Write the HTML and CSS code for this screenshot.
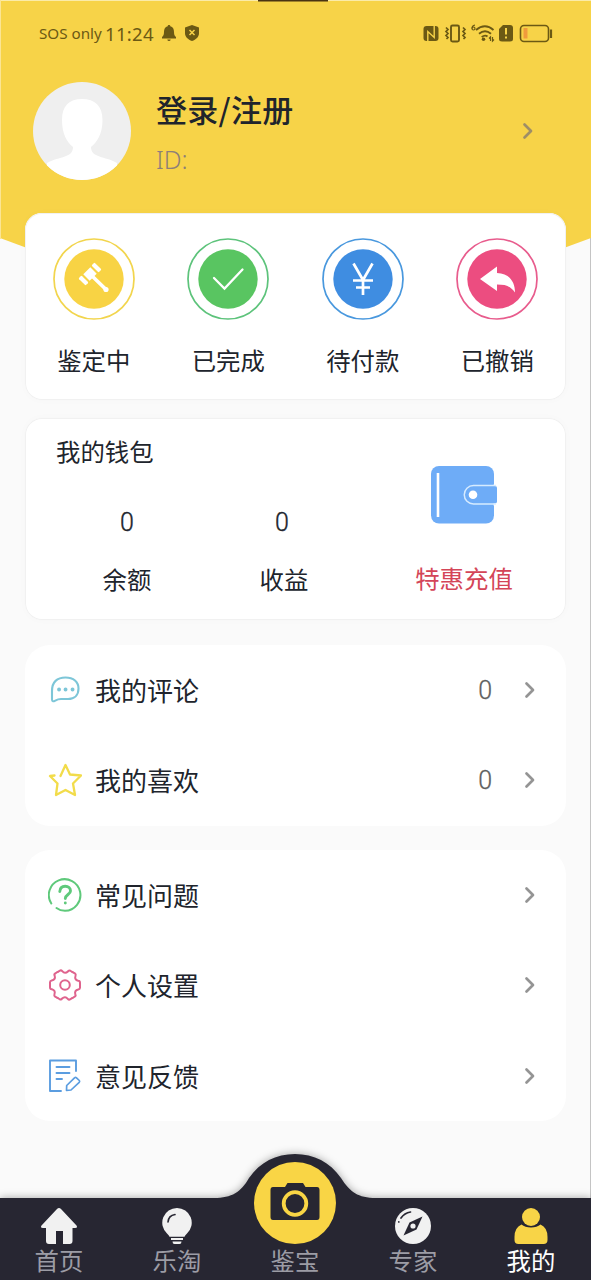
FILE: index.html
```html
<!DOCTYPE html>
<html lang="zh-CN">
<head>
<meta charset="utf-8">
<title>我的</title>
<link rel="stylesheet" href="styles.css">
</head>
<body>
<div class="screen">
  <svg class="backdrop" viewBox="0 0 591 280" aria-hidden="true">
    <path d="M0 0H591V238Q440 296 295 296T0 238Z" fill="#f7d348"/>
    <path d="M0 .5H591" stroke="#fbeba8"/><path d="M.5 0V239" stroke="#fbe595"/>
    <path d="M258 .5H328" stroke="#4a3312" stroke-width="2"/>
  </svg>

  <div class="status">
    <div class="status-left">
      <span class="carrier">SOS only</span><span class="clock">11:24</span>
      <svg class="bell" width="16" height="18" viewBox="0 0 16 18"><path d="M8 1C9 1 9.300 1.700 9.300 2.300 12 3 13 5 13 8c0 3 .8 4 2 5v1.500H1V13c1.200-1 2-2 2-5 0-3 1-5 3.700-5.700C6.700 1.700 7 1 8 1ZM6.300 15.500h3.400Q9.500 17 8 17T6.300 15.500Z" fill="#6b5914"/></svg>
      <svg width="14" height="16" viewBox="0 0 14 16"><path d="M7 0 14 2.500V8C14 12 11 14.500 7 16 3 14.500 0 12 0 8V2.500Z" fill="#6b5914"/><path d="M4.500 5 9.500 10M9.500 5 4.500 10" stroke="#f7d348" stroke-width="1.500"/></svg>
    </div>
    <svg class="status-right" width="132" height="20" viewBox="422 23 132 20" fill="none" stroke="#6b5914">
      <path d="M426.500 26H435.500Q438.500 26 438.500 29V38Q438.500 41 435.500 41H426.500Q423.500 41 423.500 38V29Q423.500 26 426.500 26Z" fill="#6b5914" stroke="none"/>
      <path d="M427.800 41V31.500L434.200 37.500V26" stroke="#f7d348" stroke-width="1.400"/>
      <rect x="451" y="25.500" width="8" height="16" rx="1.500" stroke-width="1.900"/>
      <path d="M446 27.500l2 2-2 2 2 2-2 2 2 2-1.500 1.500M463 27.500l2 2-2 2 2 2-2 2 2 2-1.500 1.500" stroke-width="1.700"/>
      <path d="M475 25Q472 25.500 472 28.500" stroke-width="1.200"/><circle cx="473.500" cy="28.500" r="1.500" stroke-width="1.200"/>
      <path d="M476 30Q485 22.500 493.500 30M479 33.800Q485 28.800 491 33.800M481.700 37Q485 34.500 487.500 36.500" stroke-width="1.900"/>
      <circle cx="483.500" cy="39.300" r="1.800" fill="#6b5914" stroke="none"/>
      <path d="M490.500 41V37l-1.500 1.500M492.500 37v4l1.500-1.500" stroke-width="1.200"/>
      <path d="M503 25h7q3 0 3 3v11q0 2.500-3 2.500h-8q-3 0-3-2.500V29Z" fill="#6b5914" stroke="none"/>
      <path d="M506 28v6.500M506 36.500v2" stroke="#f7d348" stroke-width="2"/>
      <rect x="520.500" y="25.500" width="28" height="16" rx="3.500" stroke-width="1.600"/>
      <path d="M523.500 28h4v10.500h-4Z" fill="#f09b3c" stroke="none"/><path d="M551 29.500v8.500" stroke-width="2.200"/>
    </svg>
  </div>

  <header class="profile">
    <svg class="avatar" viewBox="0 0 98 98"><defs><clipPath id="face"><circle cx="49" cy="49" r="49"/></clipPath></defs><circle cx="49" cy="49" r="49" fill="#efefef"/><path clip-path="url(#face)" d="M49 17C62 17 69.500 24 69.500 38 69.500 52 64 60 58 65 58 76 72 74 84 81V98H14V81C27 74 40 76 40 65 34 60 29 52 29 38 29 24 36 17 49 17Z" fill="#fff"/></svg>
    <div class="who"><h1>登录/注册</h1><p>ID:</p></div>
    <svg class="chev dim" viewBox="0 0 12 18"><path d="M2.500 2.500 9 9 2.500 15.500"/></svg>
  </header>

  <section class="card orders">
    <div class="order"><svg viewBox="0 0 82 82"><circle cx="41" cy="41" r="40" fill="#fff" stroke="#f2d54d" stroke-width="1.700"/><circle cx="41" cy="41" r="29.700" fill="#f8d344"/><g transform="translate(37 36) rotate(-45)" fill="#fff"><rect x="-5" y="-4.500" width="10" height="9"/><rect x="-11.300" y="-5" width="4.200" height="10" rx="1"/><rect x="7.100" y="-5" width="4.200" height="10" rx="1"/></g><path d="M38 37 52.500 51" stroke="#fff" stroke-width="3.600" stroke-linecap="round"/><circle cx="53" cy="51.500" r="2.600" fill="#fff"/></svg><span>鉴定中</span></div>
    <div class="order"><svg viewBox="0 0 82 82"><circle cx="41" cy="41" r="40" fill="#fff" stroke="#5dc37b" stroke-width="1.700"/><circle cx="41" cy="41" r="29.700" fill="#59c561"/><path d="M27 40 37.500 50.500 55.500 31.500" fill="none" stroke="#fff" stroke-width="2.300" stroke-linecap="round"/></svg><span>已完成</span></div>
    <div class="order"><svg viewBox="0 0 82 82"><circle cx="41" cy="41" r="40" fill="#fff" stroke="#4998de" stroke-width="1.700"/><circle cx="41" cy="41" r="29.700" fill="#3f8de1"/><path d="M31.500 25.500 41 42 50.500 25.500M41 41V57M31 42.500H51M34 49.500H48" fill="none" stroke="#fff" stroke-width="2.700"/></svg><span>待付款</span></div>
    <div class="order"><svg viewBox="0 0 82 82"><circle cx="41" cy="41" r="40" fill="#fff" stroke="#e85c8d" stroke-width="1.700"/><circle cx="41" cy="41" r="29.700" fill="#ec4d80"/><path d="M24 41 41 28.500V35C53 35.500 59 43 59 54.500 54 48 50 46.500 41 46.500V53Z" fill="#fff"/></svg><span>已撤销</span></div>
  </section>

  <section class="card wallet">
    <div class="wallet-main">
      <h2>我的钱包</h2>
      <div class="sums">
        <div class="sum"><b>0</b><span>余额</span></div>
        <div class="sum"><b class="nudge">0</b><span>收益</span></div>
      </div>
    </div>
    <div class="recharge">
      <svg width="68" height="60" viewBox="0 0 68 60"><rect x="1" y="1" width="63" height="57.500" rx="8" fill="#6eacf7"/><path d="M8 8V52" stroke="#fff" stroke-width="2.600"/><path d="M64.500 19.500V40.500" stroke="#fff" stroke-width="2"/><rect x="36" y="21" width="31" height="17.500" rx="2" fill="#6eacf7"/><path d="M66 20.500H43.500a9 9 0 0 0 0 18.500H66" fill="none" stroke="#d6ebff" stroke-width="1.500"/><circle cx="43" cy="29.800" r="4.300" fill="#fff"/></svg>
      <span>特惠充值</span>
    </div>
  </section>

  <section class="panel first">
    <div class="row"><svg class="icon" viewBox="0 0 34 34" stroke="#7dc6d8"><path d="M4 18C4 9 9 4.500 17.500 4.500 25.500 4.500 30.500 9 30.500 15.500 30.500 22 26.500 26 20 26H13C8 26 7 28.500 5 28.300 3.800 28 4 27 4 26Z" stroke-width="2.100"/><path d="M11 16.500h.1M17.500 16.500h.1M24.500 16.500h.1" stroke-width="3.800"/></svg><span>我的评论</span><em>0</em><svg class="chev" viewBox="0 0 12 18"><path d="M2.500 2.500 9 9 2.500 15.500"/></svg></div>
    <div class="row"><svg class="icon" viewBox="0 0 34 34" stroke="#f2dc4a"><path d="M12.500 13 17.500 2 22 11.500 33 12.500 25 20.500 27 32 17.500 27 8 32 9.500 20.500 2 13 6.500 12.500" stroke-width="2.300"/></svg><span>我的喜欢</span><em>0</em><svg class="chev" viewBox="0 0 12 18"><path d="M2.500 2.500 9 9 2.500 15.500"/></svg></div>
  </section>

  <section class="panel second">
    <div class="row"><svg class="icon" viewBox="0 0 34 34" stroke="#5fc97b"><path d="M3.300 25.500A15.800 15.800 0 1 1 17 32.800Q12 32.700 8.500 30" stroke-width="2"/><path d="M11.800 13.500C12 10 14 8.300 17.200 8.300S22.500 10.300 22.500 13C22.500 16.500 17.300 16.500 17.300 20.500M17.300 25v.1" stroke-width="2.900"/></svg><span>常见问题</span><svg class="chev" viewBox="0 0 12 18"><path d="M2.500 2.500 9 9 2.500 15.500"/></svg></div>
    <div class="row"><svg class="icon" viewBox="-17 -17 34 34" stroke="#df638d" stroke-width="2"><defs><path id="lobe" d="M15 0V2.800Q15 4.200 13.300 4.500 9.200 5.300 10.300 9.300 11.200 10.700 9.700 11.700L7.500 13"/></defs><use href="#lobe"/><use href="#lobe" transform="rotate(60)"/><use href="#lobe" transform="rotate(120)"/><use href="#lobe" transform="rotate(180)"/><use href="#lobe" transform="rotate(240)"/><use href="#lobe" transform="rotate(300)"/><circle r="4.800"/></svg><span>个人设置</span><svg class="chev" viewBox="0 0 12 18"><path d="M2.500 2.500 9 9 2.500 15.500"/></svg></div>
    <div class="row"><svg class="icon" viewBox="0 0 34 34" stroke="#5b9de0" stroke-width="1.900"><path d="M13 32H2V1.500H28V12M8.500 8H21.500M8.500 14H21.500M8.500 20H14"/><path d="M18.500 31.500 18.700 26.500 26.500 18.800Q27.500 18 28.500 18.800L31.300 21.500Q32 22.500 31.200 23.300L23 31Z" stroke-width="1.700"/></svg><span>意见反馈</span><svg class="chev" viewBox="0 0 12 18"><path d="M2.500 2.500 9 9 2.500 15.500"/></svg></div>
  </section>

  <nav class="tabs">
    <svg class="tabs-shape" viewBox="0 0 591 126" aria-hidden="true"><path d="M0 44H214C232 44 241 38 249 24 260 8 276 0 295 0 314 0 330 8 341 24 350 38 358 44 376 44H591V126H0Z" fill="#272632"/></svg>
    <div class="tab"><svg width="38" height="36" viewBox="0 0 38 36" fill="#f1f1f1"><path d="M17 1Q19 -.8 21 1L36.500 17.500Q38 20 35 20H32.500V33Q32.500 36 29.500 36H23V23H16V36H9Q6 36 6 33V20H3Q0 20 1.500 17.500Z"/></svg><span>首页</span></div>
    <div class="tab"><svg width="38" height="36" viewBox="0 0 38 36" fill="#f1f1f1"><path d="M19 0A14.700 14.700 0 0 1 29 25.500Q27 27.500 26.500 28.800H11.500Q11 27.500 9 25.500A14.700 14.700 0 0 1 19 0Z"/><path d="M13 30H25V32H13ZM14.500 33.500H23.500Q23.500 36 21.500 36H16.500Q14.500 36 14.500 33.500Z"/><path d="M10 14Q10.500 7.500 17 6.500" fill="none" stroke="#272632" stroke-width="1.600" stroke-linecap="round"/></svg><span>乐淘</span></div>
    <div class="tab"><svg width="82" height="82" viewBox="0 0 82 82"><circle cx="41" cy="41" r="41" fill="#f9d545"/><path d="M19 25H31L33.500 21H49L51.500 25H63Q65.500 25 65.500 28V55Q65.500 58 63 58H19Q16.500 58 16.500 55V28Q16.500 25 19 25Z" fill="#272632"/><circle cx="41" cy="41.500" r="11.300" fill="none" stroke="#f9d545" stroke-width="3.800"/></svg><span>鉴宝</span></div>
    <div class="tab"><svg width="38" height="36" viewBox="0 0 38 36"><circle cx="19" cy="18" r="18" fill="#f1f1f1"/><path d="M28.500 8.500 22.500 21.500 9.500 27.500 15.500 14.500Z" fill="#272632"/><circle cx="19" cy="18" r="2.600" fill="#f1f1f1"/><path d="M7 10Q10.500 5 16.500 4M4.800 14v-.2" fill="none" stroke="#272632" stroke-width="1.700" stroke-linecap="round"/></svg><span>专家</span></div>
    <div class="tab active"><svg width="38" height="36" viewBox="0 0 38 36" fill="#f8d447"><circle cx="19" cy="9" r="9"/><path d="M9.500 16.500Q13 19.500 19 19.500T28.500 16.500Q35.500 19.500 35.500 29V32Q35.500 36 31.500 36H6.500Q2.500 36 2.500 32V29Q2.500 19.500 9.500 16.500Z"/></svg><span>我的</span></div>
  </nav>
</div>
</body>
</html>
```
FILE: styles.css
```css
* { box-sizing: border-box; margin: 0; padding: 0; }
body { width: 591px; height: 1280px; overflow: hidden; font-family: "Noto Sans CJK SC", sans-serif; color: #20242c; }
svg { display: block; flex: none; }
.screen { position: relative; isolation: isolate; display: flex; flex-direction: column; height: 1280px; background: #fafafa; border-right: 1px solid #c4c4c4; }
.backdrop { position: absolute; z-index: -1; top: 0; left: 0; width: 591px; height: 280px; }

.status { display: flex; justify-content: space-between; align-items: center; height: 66px; padding: 0 36px 0 39px; font-family: "Noto Sans", sans-serif; color: #6b5914; }
.status-left { display: flex; align-items: center; }
.carrier { font-size: 15.200px; width: 66px; white-space: nowrap; }
.clock { font-size: 18.500px; width: 56px; letter-spacing: .3px; }
.bell { margin-right: 8px; }

.profile { display: flex; align-items: center; height: 98px; margin: 16px 56px 33px 33px; }
.avatar { width: 98px; height: 98px; }
.who { flex: 1; padding-left: 25px; }
.who h1 { margin-top: 3px; font-size: 31px; line-height: 46px; font-weight: 500; letter-spacing: .3px; }
.who p { margin-top: 7px; font: 300 25px/40px "Noto Sans", sans-serif; color: #8e7f78; }
.chev { width: 12px; height: 18px; fill: none; stroke: #949494; stroke-width: 2.700; stroke-linecap: round; stroke-linejoin: round; }
.chev.dim { stroke: #9e8e67; }

.card { margin: 0 24px 0 25px; background: #fff; border-radius: 17px; box-shadow: inset 0 0 0 1px #f1f1f1, 0 0 8px rgba(0,0,0,.02); }
.orders { display: grid; grid-template-columns: repeat(4, 134.500px); justify-content: center; height: 187px; padding-top: 25px; }
.order { display: flex; flex-direction: column; align-items: center; gap: 22px; font-size: 24.400px; line-height: 36px; }
.order svg { width: 82px; height: 82px; }
.wallet { display: flex; height: 202px; margin-top: 18px; font-size: 24.400px; }
.wallet-main { width: 338px; padding: 15px 0 0 24px; }
.wallet h2 { padding-left: 7px; font-size: 24.400px; font-weight: 400; line-height: 36px; }
.sums { display: grid; grid-template-columns: 156px 158px; margin-top: 35px; }
.sum { display: flex; flex-direction: column; align-items: center; line-height: 36px; }
.sum b { font: 300 25px/38px Roboto, sans-serif; margin-bottom: 19px; -webkit-text-stroke: .35px #20242c; }
.sum .nudge { margin-right: 4px; }
.recharge { display: flex; flex-direction: column; align-items: center; width: 202px; padding-top: 47px; color: #d44558; }
.recharge span { margin-top: 35px; line-height: 36px; }

.panel { margin: 0 24px 0 25px; background: #fff; border-radius: 25px; }
.first { height: 181px; margin-top: 25px; }
.second { height: 271px; margin-top: 24px; }
.row { display: flex; align-items: center; height: 90.300px; padding: 0 30px 0 23px; font-size: 26px; }
.icon { width: 34px; height: 34px; margin-right: 13px; fill: none; stroke-linecap: round; stroke-linejoin: round; }
.row span { flex: 1; line-height: 36px; }
.row em { margin: 2px 32px 0 0; font: 300 25px/36px Roboto, sans-serif; color: #5e5e5e; -webkit-text-stroke: .3px #5e5e5e; }

.tabs { position: relative; isolation: isolate; display: grid; grid-template-columns: repeat(5, 118px); align-items: end; height: 126px; margin-top: auto; padding-bottom: 4px; }
.tabs-shape { position: absolute; z-index: -1; top: 0; left: 0; width: 591px; height: 126px; overflow: visible; filter: drop-shadow(0 0 4px rgba(0,0,0,.35)); }
.tab { display: flex; flex-direction: column; align-items: center; color: #9c9ca5; font-size: 24.400px; line-height: 32px; }
.active { color: #fff; }
```
